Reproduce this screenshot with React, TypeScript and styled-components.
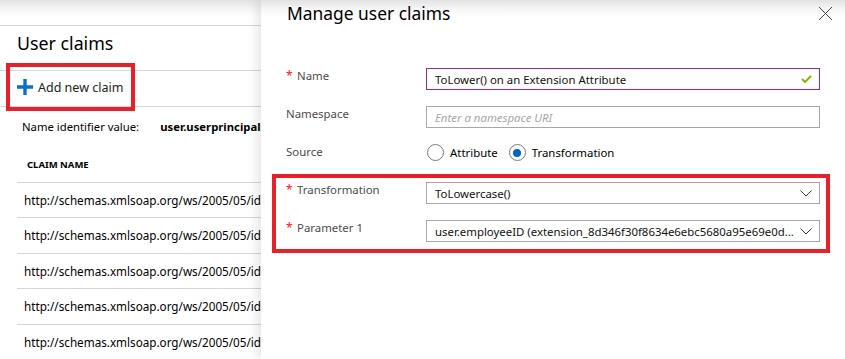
import styled, { createGlobalStyle } from "styled-components"

const Global = createGlobalStyle`
html, body {
    margin: 0;
    padding: 0;
    background: #fff;
}
body {
    font-family: "Noto Sans", "Open Sans", sans-serif;
    color: #000;
}
`

const Page = styled.div`
width: 845px;
height: 359px;
overflow: hidden;
display: grid;
grid-template-columns: 261px minmax(0, 1fr);
`

const ClaimsBlade = styled.section`
background: linear-gradient(to bottom, #e2e2e2 0, #f6f6f6 9px, #fff 17px);
overflow: hidden;
display: flex;
flex-direction: column;
`

const TopStrip = styled.div`
height: 25px;
border-bottom: 1px solid #d6d6d6;
flex-shrink: 0;
`

const BladeTitle = styled.h1`
margin: 0;
height: 44px;
padding-left: 17px;
font-size: 17.8px;
font-weight: 400;
line-height: 35px;
border-bottom: 1px solid #d6d6d6;
flex-shrink: 0;
`

const Toolbar = styled.div`
height: 35px;
padding-left: 10px;
display: flex;
align-items: flex-start;
border-bottom: 1px solid #d6d6d6;
flex-shrink: 0;
`

const AddButton = styled.button<{ $marked?: boolean }>`
height: 40px;
margin-top: -4px;
width: 121px;
padding: 0 0 0 7px;
border: 0;
background: transparent;
outline: 4.5px solid ${(p) => (p.$marked ? "#e8202a" : "transparent")};
display: flex;
align-items: center;
gap: 5px;
font-family: inherit;
font-size: 12.5px;
color: #222;
`

const IdentifierRow = styled.div`
height: 40px;
padding-left: 22px;
display: flex;
align-items: center;
font-size: 11.3px;
white-space: nowrap;

b {
    margin-left: 21px;
    font-weight: 700;
}
`

const ColumnHead = styled.div`
height: 36px;
padding-left: 27px;
display: flex;
align-items: center;
font-size: 9.5px;
font-weight: 700;
text-transform: uppercase;
`

const ClaimRow = styled.div`
height: 35px;
margin-left: 17px;
padding-left: 7px;
border-top: 1px solid #d6d6d6;
display: flex;
align-items: center;
font-size: 11.7px;
white-space: nowrap;
`

const DialogBlade = styled.section`
position: relative;
min-width: 0;
background: linear-gradient(to bottom, #e2e2e2 0, #f6f6f6 9px, #fff 17px);
box-shadow: -5px 0 9px rgba(0, 0, 0, 0.09);
display: flex;
flex-direction: column;
`

const DialogHeader = styled.header`
height: 26px;
padding: 0 12px 0 26px;
display: flex;
align-items: center;
justify-content: space-between;

h2 {
    margin: 0;
    font-size: 17.4px;
    font-weight: 400;
}
`

const CloseButton = styled.button`
border: 0;
background: transparent;
padding: 0;
width: 15px;
height: 15px;
display: flex;
`

const Form = styled.div`
padding: 42px 19px 0 15px;
display: flex;
flex-direction: column;
gap: 16px;
`

const Group = styled.div`
margin-top: -4px;
padding: 4px 0 7px;
outline: 4.5px solid #e8202a;
display: flex;
flex-direction: column;
gap: 16px;
`

const Row = styled.div`
min-height: 22px;
padding: 0 6px 0 10px;
display: flex;
align-items: flex-start;
`

const Label = styled.label`
width: 140px;
flex-shrink: 0;
line-height: 16px;
font-size: 11.4px;
color: #4c4c4c;
display: flex;
gap: 4px;

span {
    width: 7px;
    color: #e8202a;
    font-size: 12px;
}
`

const Field = styled.div<{ $active?: boolean }>`
flex: 1;
min-width: 0;
height: 22px;
box-sizing: border-box;
border: 1px solid ${(p) => (p.$active ? "#8a2da5" : "#a8a8a8")};
padding: 0 7px 0 8px;
display: flex;
align-items: center;
gap: 6px;
font-size: 11.4px;
white-space: nowrap;
overflow: hidden;
`

const FieldText = styled.span<{ $placeholder?: boolean }>`
flex: 1;
min-width: 0;
overflow: hidden;
text-overflow: ellipsis;
color: ${(p) => (p.$placeholder ? "#a6a6a6" : "#111")};
font-style: ${(p) => (p.$placeholder ? "italic" : "normal")};
`

const RadioGroup = styled.div`
display: flex;
align-items: center;
gap: 11px;
margin-left: 1px;
`

const RadioOption = styled.div`
display: flex;
align-items: center;
gap: 6px;
font-size: 11.4px;
`

const RadioDot = styled.span<{ $checked?: boolean }>`
width: 15px;
height: 15px;
border: 1px solid #7a7a7a;
border-radius: 50%;
display: flex;
align-items: center;
justify-content: center;

&::after {
    content: "";
    width: 8px;
    height: 8px;
    border-radius: 50%;
    background: ${(p) => (p.$checked ? "#0063c6" : "transparent")};
}
`

const Chevron = () => (
    <svg width="12" height="7" viewBox="0 0 12 7">
        <path d="M0.5 0.5 L6 6 L11.5 0.5" fill="none" stroke="#333" strokeWidth="1" />
    </svg>
)

const claims = [1, 2, 3, 4, 5]

export default function App() {
    return (
        <>
            <Global />
            <Page>
                <ClaimsBlade>
                    <TopStrip />
                    <BladeTitle>User claims</BladeTitle>
                    <Toolbar>
                        <AddButton $marked>
                            <svg width="16" height="16" viewBox="0 0 16 16">
                                <path d="M8 0 V16 M0 8 H16" stroke="#0a6fd0" strokeWidth="3.4" />
                            </svg>
                            Add new claim
                        </AddButton>
                    </Toolbar>
                    <IdentifierRow>
                        Name identifier value:<b>user.userprincipalname</b>
                    </IdentifierRow>
                    <ColumnHead>Claim name</ColumnHead>
                    {claims.map((c) => (
                        <ClaimRow key={c}>http://schemas.xmlsoap.org/ws/2005/05/identity/claims</ClaimRow>
                    ))}
                </ClaimsBlade>
                <DialogBlade>
                    <DialogHeader>
                        <h2>Manage user claims</h2>
                        <CloseButton>
                            <svg width="15" height="15" viewBox="0 0 15 15">
                                <path d="M1 1 L14 14 M14 1 L1 14" stroke="#444" strokeWidth="1" />
                            </svg>
                        </CloseButton>
                    </DialogHeader>
                    <Form>
                        <Row>
                            <Label><span>*</span>Name</Label>
                            <Field $active>
                                <FieldText>ToLower() on an Extension Attribute</FieldText>
                                <svg width="11" height="8" viewBox="0 0 11 8">
                                    <path d="M1 4 L4 7 L10 1" fill="none" stroke="#7fba00" strokeWidth="2" />
                                </svg>
                            </Field>
                        </Row>
                        <Row>
                            <Label>Namespace</Label>
                            <Field>
                                <FieldText $placeholder>Enter a namespace URI</FieldText>
                            </Field>
                        </Row>
                        <Row>
                            <Label>Source</Label>
                            <RadioGroup>
                                <RadioOption><RadioDot />Attribute</RadioOption>
                                <RadioOption><RadioDot $checked />Transformation</RadioOption>
                            </RadioGroup>
                        </Row>
                        <Group>
                            <Row>
                                <Label><span>*</span>Transformation</Label>
                                <Field>
                                    <FieldText>ToLowercase()</FieldText>
                                    <Chevron />
                                </Field>
                            </Row>
                            <Row>
                                <Label><span>*</span>Parameter 1</Label>
                                <Field>
                                    <FieldText>user.employeeID (extension_8d346f30f8634e6ebc5680a95e69e0df_employeeID)</FieldText>
                                    <Chevron />
                                </Field>
                            </Row>
                        </Group>
                    </Form>
                </DialogBlade>
            </Page>
        </>
    )
}
